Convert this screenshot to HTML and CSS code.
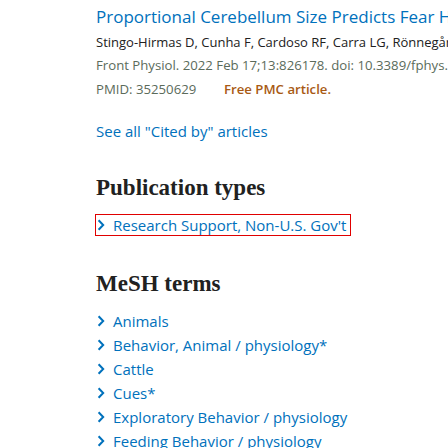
FILE: index.html
```html
<!DOCTYPE html>
<html>
<head>
<meta charset="utf-8">
<link rel="stylesheet" href="styles.css">
</head>
<body>
<div class="page">
  <div class="citation">
    <div class="title">Proportional Cerebellum Size Predicts Fear Habituation in Cattle</div>
    <div class="authors">Stingo-Hirmas D, Cunha F, Cardoso RF, Carra LG, Rönnegård L, Wallner B, Mendes de Oliveira C.</div>
    <div class="journal">Front Physiol. 2022 Feb 17;13:826178. doi: 10.3389/fphys.2022.826178. eCollection 2022.</div>
    <div class="meta"><span class="pmid">PMID: 35250629</span><span class="free">Free PMC article.</span></div>
  </div>
  <a class="see-all">See all "Cited by" articles</a>

  <h2 class="heading pub-heading">Publication types</h2>
  <div class="pub-list">
    <a class="term focused"><svg class="chev" width="8" height="12" viewBox="0 0 8 12"><path d="M1.6 1.2 L6.2 6 L1.6 10.8" fill="none" stroke="#0071bc" stroke-width="2"/></svg><span>Research Support, Non-U.S. Gov't</span></a>
  </div>

  <h2 class="heading mesh-heading">MeSH terms</h2>
  <ul class="mesh-list">
    <li><a class="term"><svg class="chev" width="8" height="12" viewBox="0 0 8 12"><path d="M1.6 1.2 L6.2 6 L1.6 10.8" fill="none" stroke="#0071bc" stroke-width="2"/></svg><span>Animals</span></a></li>
    <li><a class="term"><svg class="chev" width="8" height="12" viewBox="0 0 8 12"><path d="M1.6 1.2 L6.2 6 L1.6 10.8" fill="none" stroke="#0071bc" stroke-width="2"/></svg><span>Behavior, Animal / physiology*</span></a></li>
    <li><a class="term"><svg class="chev" width="8" height="12" viewBox="0 0 8 12"><path d="M1.6 1.2 L6.2 6 L1.6 10.8" fill="none" stroke="#0071bc" stroke-width="2"/></svg><span>Cattle</span></a></li>
    <li><a class="term"><svg class="chev" width="8" height="12" viewBox="0 0 8 12"><path d="M1.6 1.2 L6.2 6 L1.6 10.8" fill="none" stroke="#0071bc" stroke-width="2"/></svg><span>Cues*</span></a></li>
    <li><a class="term"><svg class="chev" width="8" height="12" viewBox="0 0 8 12"><path d="M1.6 1.2 L6.2 6 L1.6 10.8" fill="none" stroke="#0071bc" stroke-width="2"/></svg><span>Exploratory Behavior / physiology</span></a></li>
    <li><a class="term"><svg class="chev" width="8" height="12" viewBox="0 0 8 12"><path d="M1.6 1.2 L6.2 6 L1.6 10.8" fill="none" stroke="#0071bc" stroke-width="2"/></svg><span>Feeding Behavior / physiology</span></a></li>
  </ul>
</div>
</body>
</html>
```
FILE: styles.css
```css
html, body {
  margin: 0;
  padding: 0;
  background: #fff;
  overflow: hidden;
}
.page {
  padding-left: 96px;
  font-family: "Open Sans", "Noto Sans", sans-serif;
  white-space: nowrap;
}
.citation {
  padding-top: 4px;
}
.title {
  color: #0071bc;
  font-size: 17px;
  line-height: 26px;
}
.authors {
  color: #212121;
  font-size: 13px;
  line-height: 24px;
}
.journal {
  color: #5b6b5b;
  font-size: 13.2px;
  line-height: 23px;
}
.meta {
  display: flex;
  color: #5b6b5b;
  font-size: 13.2px;
  line-height: 24px;
}
.pmid {
  width: 128px;
}
.free {
  color: #a85a14;
  font-weight: 600;
}
.see-all {
  display: block;
  margin-top: 19px;
  color: #0071bc;
  font-size: 15px;
  line-height: 22px;
}
.heading {
  font-family: "Liberation Serif", serif;
  font-weight: bold;
  color: #212121;
  font-size: 23px;
  line-height: 28px;
  margin: 0;
}
.pub-heading {
  margin-top: 32px;
}
.pub-list {
  display: flex;
  margin-top: 13px;
}
.term {
  display: flex;
  align-items: center;
  gap: 8px;
  color: #0071bc;
  font-size: 15px;
  line-height: 24px;
  padding-left: 1px;
}
.chev {
  display: block;
  flex: none;
}
.focused {
  line-height: 20px;
  outline: 1px solid #e00000;
  padding-right: 4px;
}
.mesh-heading {
  margin-top: 35px;
}
.mesh-list {
  list-style: none;
  margin: 11px 0 0 0;
  padding: 0;
}
.mesh-list li {
  display: flex;
  height: 24px;
}
```
